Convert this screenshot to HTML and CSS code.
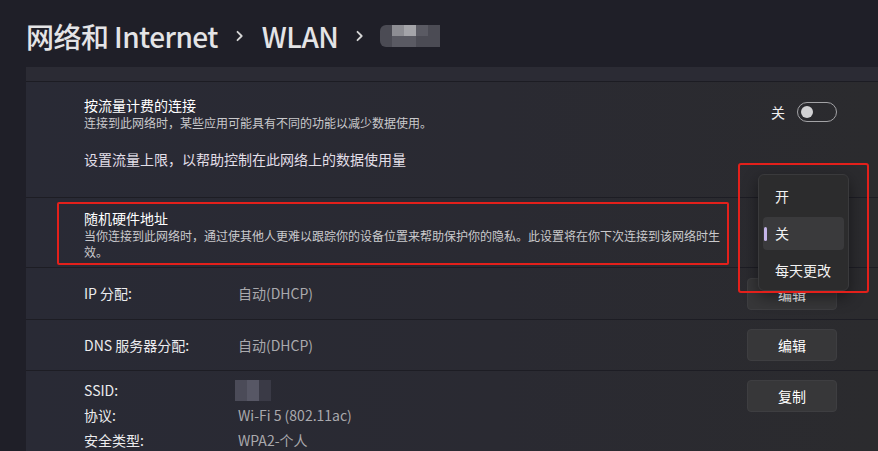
FILE: index.html
```html
<!DOCTYPE html>
<html lang="zh-CN">
<head>
    <meta charset="UTF-8">
    <meta name="viewport" content="width=device-width, initial-scale=1.0">
    <title>WLAN 属性</title>
    <link rel="stylesheet" href="styles.css">
</head>
<body>
    <div class="page">
        <header class="crumbs">
            <span class="crumb">网络和 Internet</span>
            <svg class="chev" width="9" height="12" viewBox="0 0 9 12"><path d="M2.5 1.8l4.2 4.2-4.2 4.2" fill="none" stroke="#d6d6d6" stroke-width="1.8" stroke-linecap="round" stroke-linejoin="round"/></svg>
            <span class="crumb">WLAN</span>
            <svg class="chev" width="9" height="12" viewBox="0 0 9 12"><path d="M2.5 1.8l4.2 4.2-4.2 4.2" fill="none" stroke="#d6d6d6" stroke-width="1.8" stroke-linecap="round" stroke-linejoin="round"/></svg>
            <div class="mosaic mosaic-name">
                <i class="m1"></i><i class="m3"></i><i class="m4"></i><i class="m2"></i><i class="m1"></i>
                <i class="m1"></i><i class="m2"></i><i class="m2"></i><i class="m1"></i><i class="m1"></i>
            </div>
        </header>

        <main class="panel">
            <div class="panel-top"></div>

            <section class="row metered">
                <div class="metered-head">
                    <div class="texts">
                        <div class="title">按流量计费的连接</div>
                        <div class="desc">连接到此网络时，某些应用可能具有不同的功能以减少数据使用。</div>
                    </div>
                    <div class="switch-wrap">
                        <span class="switch-label">关</span>
                        <span class="switch"><span class="knob"></span></span>
                    </div>
                </div>
                <div class="link">设置流量上限，以帮助控制在此网络上的数据使用量</div>
            </section>

            <section class="row random-mac">
                <div class="marked">
                    <div class="title">随机硬件地址</div>
                    <div class="desc wrap">当你连接到此网络时，通过使其他人更难以跟踪你的设备位置来帮助保护你的隐私。此设置将在你下次连接到该网络时生效。</div>
                </div>
            </section>

            <section class="row info ip">
                <div class="pairs">
                    <span class="label">IP 分配:</span><span class="value">自动(DHCP)</span>
                </div>
                <button class="btn">编辑</button>
            </section>

            <section class="row info dns">
                <div class="pairs">
                    <span class="label">DNS 服务器分配:</span><span class="value">自动(DHCP)</span>
                </div>
                <button class="btn">编辑</button>
            </section>

            <section class="row info props">
                <div class="pairs">
                    <span class="label">SSID:</span>
                    <span class="value">
                        <span class="mosaic mosaic-ssid">
                            <i class="s2"></i><i class="s3"></i><i class="s1"></i>
                            <i class="s2"></i><i class="s3"></i><i class="s1"></i>
                        </span>
                    </span>
                    <span class="label">协议:</span><span class="value">Wi-Fi 5 (802.11ac)</span>
                    <span class="label">安全类型:</span><span class="value">WPA2-个人</span>
                </div>
                <button class="btn">复制</button>
            </section>
        </main>

        <!-- dropdown opened from the 随机硬件地址 setting -->
        <div class="menu">
            <div class="menu-item">开</div>
            <div class="menu-item selected">关</div>
            <div class="menu-item">每天更改</div>
        </div>
        <div class="mark-box"></div>
    </div>
</body>
</html>
```

FILE: styles.css
```css
* {
    margin: 0;
    padding: 0;
    box-sizing: border-box;
}

body {
    background-color: #1f1f28;
    font-family: "Noto Sans CJK SC", "Noto Sans", sans-serif;
    color: #ffffff;
    overflow: hidden;
}

.page {
    position: relative;
    width: 878px;
    height: 451px;
    overflow: hidden;
}

/* breadcrumb */
.crumbs {
    display: flex;
    align-items: center;
    height: 67px;
    padding: 0 0 0 26px;
}

.crumb {
    font-size: 28px;
    line-height: 32px;
    font-weight: 500;
    color: #e4e4e6;
    letter-spacing: -0.55px;
    padding-top: 4px;
}

.chev {
    margin: 4px 18px 0 17px;
}

.mosaic {
    display: grid;
}

.mosaic i {
    display: block;
}

.mosaic-name {
    grid-template-columns: repeat(5, 12px);
    grid-template-rows: 11px 11px;
    margin: 4px 0 0 -2px;
    border-radius: 6px 0 0 6px;
    overflow: hidden;
}

.m1 { background: #4b4b54; }
.m2 { background: #5a5a63; }
.m3 { background: #8d8d93; }
.m4 { background: #a4a4a9; }

.mosaic-ssid {
    grid-template-columns: repeat(3, 12px);
    grid-template-rows: 10px 11px;
    margin: 2px 0 0 -3px;
}

.s1 { background: #3a3a46; }
.s2 { background: #4b4b58; }
.s3 { background: #575765; }

/* settings panel */
.panel {
    margin-left: 26px;
    height: 384px;
    background: linear-gradient(90deg, #292a35 0%, #2a2a32 55%, #2b2b2e 100%);
}

.panel-top {
    height: 15px;
    background-color: #2b2b34;
    border-bottom: 1px solid #1c1c23;
}

.row {
    border-bottom: 1px solid #1d1d24;
}

.title {
    font-size: 14px;
    line-height: 20px;
    color: #ffffff;
}

.desc {
    font-size: 12px;
    line-height: 16px;
    color: #c9c9cc;
}

.metered {
    height: 116px;
    padding: 13px 41px 0 58px;
}

.metered-head {
    display: flex;
    justify-content: space-between;
    align-items: center;
}

.switch-wrap {
    display: flex;
    align-items: center;
    margin-top: -2px;
}

.switch-label {
    font-size: 14px;
    margin-right: 12px;
    color: #f0f0f0;
}

.switch {
    position: relative;
    display: inline-block;
    width: 40px;
    height: 20px;
    border: 1px solid #a3a3a6;
    border-radius: 10px;
}

.knob {
    position: absolute;
    left: 3px;
    top: 3px;
    width: 12px;
    height: 12px;
    border-radius: 50%;
    background-color: #d2d2d4;
}

.link {
    margin-top: 18px;
    font-size: 14px;
    line-height: 20px;
    color: #e2dfe8;
}

.random-mac {
    height: 70px;
    padding: 4px 0 0 31px;
}

.marked {
    width: 672px;
    height: 63px;
    padding: 4px 6px 0 25px;
    border: 2px solid #e3201b;
    border-radius: 2px;
}

.info {
    display: flex;
    justify-content: space-between;
    align-items: center;
    padding: 0 41px 0 58px;
}

.ip {
    height: 52px;
}

.dns {
    height: 51px;
}

.props {
    align-items: flex-start;
    padding-top: 7px;
    border-bottom: none;
}

.pairs {
    display: grid;
    grid-template-columns: 154px auto;
    font-size: 14px;
    line-height: 25px;
}

.label {
    color: #ececee;
}

.value {
    color: #a9a9ad;
}

.btn {
    width: 90px;
    height: 32px;
    background-color: #373739;
    border: 1px solid #3e3e41;
    border-radius: 4px;
    color: #ffffff;
    font-family: inherit;
    font-size: 14px;
}

.props .btn {
    margin-top: 2px;
}

/* open dropdown */
.menu {
    position: absolute;
    left: 758px;
    top: 174px;
    width: 91px;
    height: 117px;
    padding: 5px 4px;
    background-color: #2c2c2d;
    border: 1px solid #3a3a3c;
    border-radius: 6px;
    box-shadow: 0 6px 16px rgba(0, 0, 0, 0.45);
    display: flex;
    flex-direction: column;
    gap: 4px;
}

.menu-item {
    position: relative;
    height: 33px;
    line-height: 33px;
    padding-left: 12px;
    font-size: 14px;
    color: #f2f2f2;
    border-radius: 4px;
}

.menu-item.selected {
    background-color: #3a3a3c;
}

.menu-item.selected::before {
    content: "";
    position: absolute;
    left: 1px;
    top: 10px;
    width: 3px;
    height: 14px;
    border-radius: 2px;
    background-color: #c4b4e8;
}

.mark-box {
    position: absolute;
    left: 738px;
    top: 163px;
    width: 131px;
    height: 130px;
    border: 2px solid #e3201b;
    border-radius: 3px;
}
```
